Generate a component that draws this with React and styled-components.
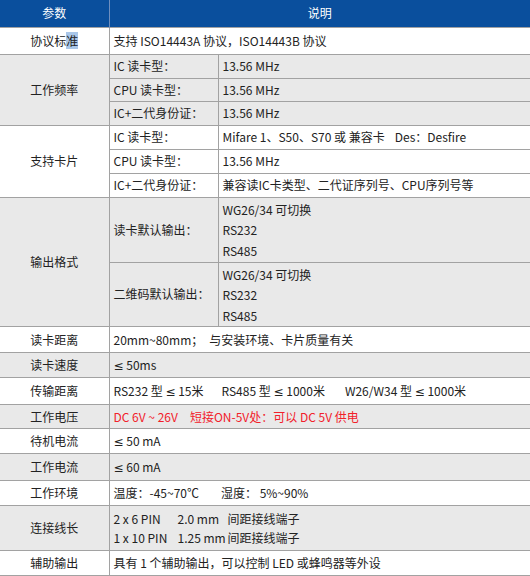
import React from "react";
import styled, { createGlobalStyle } from "styled-components";

const Global = createGlobalStyle`
  html, body { margin: 0; padding: 0; background: #fff; }
  body { font-family: "Noto Sans CJK SC", "Noto Sans", sans-serif; }
`;

const Table = styled.table`
  width: 530px;
  border-collapse: collapse;
  table-layout: fixed;
  font-size: 12px;
  color: #222;
  line-height: 20px;
`;

const Row = styled.tr`
  height: ${(p) => p.$h}px;
  background: ${(p) => (p.$shade ? "#e9e9e9" : "#ffffff")};
`;

const HeadRow = styled.tr`
  height: 27px;
  background: #0a4f9d;
`;

const Th = styled.th`
  color: #fff;
  font-weight: normal;
  font-size: 12px;
  text-align: center;
  padding: 0;
  border-right: ${(p) => (p.$divider ? "1px solid #6f8fbf" : "none")};
`;

const Cell = styled.td`
  padding: 0 4px;
  border-top: 1px solid #a2a2a2;
  border-bottom: 1px solid #a2a2a2;
  vertical-align: ${(p) => (p.$top ? "top" : "middle")};
  white-space: nowrap;
  overflow: hidden;
`;

const Param = styled(Cell)`
  text-align: center;
  border-right: 1px solid #a2a2a2;
  padding: 0;
`;

const Label = styled(Cell)`
  border-right: 1px solid #a2a2a2;
`;

const Value = styled(Cell)`
  color: ${(p) => (p.$red ? "#f2202a" : "#222")};
  padding-top: ${(p) => (p.$top ? 2 : 0)}px;
`;

const Lines = styled.div`
  display: flex;
  flex-direction: column;
  line-height: ${(p) => p.$lh}px;
`;

const Gap = styled.span`
  display: inline-block;
  width: ${(p) => p.$w}px;
`;

const Le = styled.span`
  font-family: "Noto Sans", "DejaVu Sans", sans-serif;
`;

const Highlight = styled.span`
  background: #a9c6e8;
`;

const PinGrid = styled.div`
  display: grid;
  grid-template-columns: 64px 50px auto;
  line-height: 19px;
`;

export default function App() {
  return (
    <>
      <Global />
      <Table>
        <colgroup>
          <col style={{ width: 109 }} />
          <col style={{ width: 109 }} />
          <col />
        </colgroup>
        <thead>
          <HeadRow>
            <Th $divider>参数</Th>
            <Th colSpan={2}>说明</Th>
          </HeadRow>
        </thead>
        <tbody>
          <Row $h={27}>
            <Param>协议标<Highlight>准</Highlight></Param>
            <Value colSpan={2}>支持 ISO14443A 协议，ISO14443B 协议</Value>
          </Row>

          <Row $h={24} $shade>
            <Param rowSpan={3}>工作频率</Param>
            <Label>IC 读卡型：</Label>
            <Value>13.56 MHz</Value>
          </Row>
          <Row $h={23} $shade>
            <Label>CPU 读卡型：</Label>
            <Value>13.56 MHz</Value>
          </Row>
          <Row $h={24} $shade>
            <Label>IC+二代身份证：</Label>
            <Value>13.56 MHz</Value>
          </Row>

          <Row $h={24}>
            <Param rowSpan={3}>支持卡片</Param>
            <Label>IC 读卡型：</Label>
            <Value>Mifare 1、S50、S70 或 兼容卡<Gap $w={10} />Des：Desfire</Value>
          </Row>
          <Row $h={24}>
            <Label>CPU 读卡型：</Label>
            <Value>13.56 MHz</Value>
          </Row>
          <Row $h={24}>
            <Label>IC+二代身份证：</Label>
            <Value>兼容读IC卡类型、二代证序列号、CPU序列号等</Value>
          </Row>

          <Row $h={65} $shade>
            <Param rowSpan={2}>输出格式</Param>
            <Label>读卡默认输出：</Label>
            <Value $top>
              <Lines $lh={20.5}>
                <span>WG26/34 可切换</span>
                <span>RS232</span>
                <span>RS485</span>
              </Lines>
            </Value>
          </Row>
          <Row $h={64} $shade>
            <Label>二维码默认输出：</Label>
            <Value $top>
              <Lines $lh={20.5}>
                <span>WG26/34 可切换</span>
                <span>RS232</span>
                <span>RS485</span>
              </Lines>
            </Value>
          </Row>

          <Row $h={26}>
            <Param>读卡距离</Param>
            <Value colSpan={2}>20mm~80mm；<Gap $w={6} />与安装环境、卡片质量有关</Value>
          </Row>
          <Row $h={25} $shade>
            <Param>读卡速度</Param>
            <Value colSpan={2}><Le>≤</Le> 50ms</Value>
          </Row>
          <Row $h={27}>
            <Param>传输距离</Param>
            <Value colSpan={2}>
              RS232 型 <Le>≤</Le> 15米<Gap $w={18} />RS485 型 <Le>≤</Le> 1000米<Gap $w={20} />W26/W34 型 <Le>≤</Le> 1000米
            </Value>
          </Row>
          <Row $h={24} $shade>
            <Param>工作电压</Param>
            <Value colSpan={2} $red>DC 6V ~ 26V<Gap $w={12} />短接ON-5V处：可以 DC 5V 供电</Value>
          </Row>
          <Row $h={25}>
            <Param>待机电流</Param>
            <Value colSpan={2}><Le>≤</Le> 50 mA</Value>
          </Row>
          <Row $h={27} $shade>
            <Param>工作电流</Param>
            <Value colSpan={2}><Le>≤</Le> 60 mA</Value>
          </Row>
          <Row $h={25}>
            <Param>工作环境</Param>
            <Value colSpan={2}>温度：-45~70℃<Gap $w={22} />湿度： 5%~90%</Value>
          </Row>
          <Row $h={45} $shade>
            <Param>连接线长</Param>
            <Value colSpan={2}>
              <PinGrid>
                <span>2 x 6 PIN</span>
                <span>2.0 mm</span>
                <span>间距接线端子</span>
                <span>1 x 10 PIN</span>
                <span>1.25 mm</span>
                <span>间距接线端子</span>
              </PinGrid>
            </Value>
          </Row>
          <Row $h={25}>
            <Param>辅助输出</Param>
            <Value colSpan={2}>具有 1 个辅助输出，可以控制 LED 或蜂鸣器等外设</Value>
          </Row>
        </tbody>
      </Table>
    </>
  );
}
